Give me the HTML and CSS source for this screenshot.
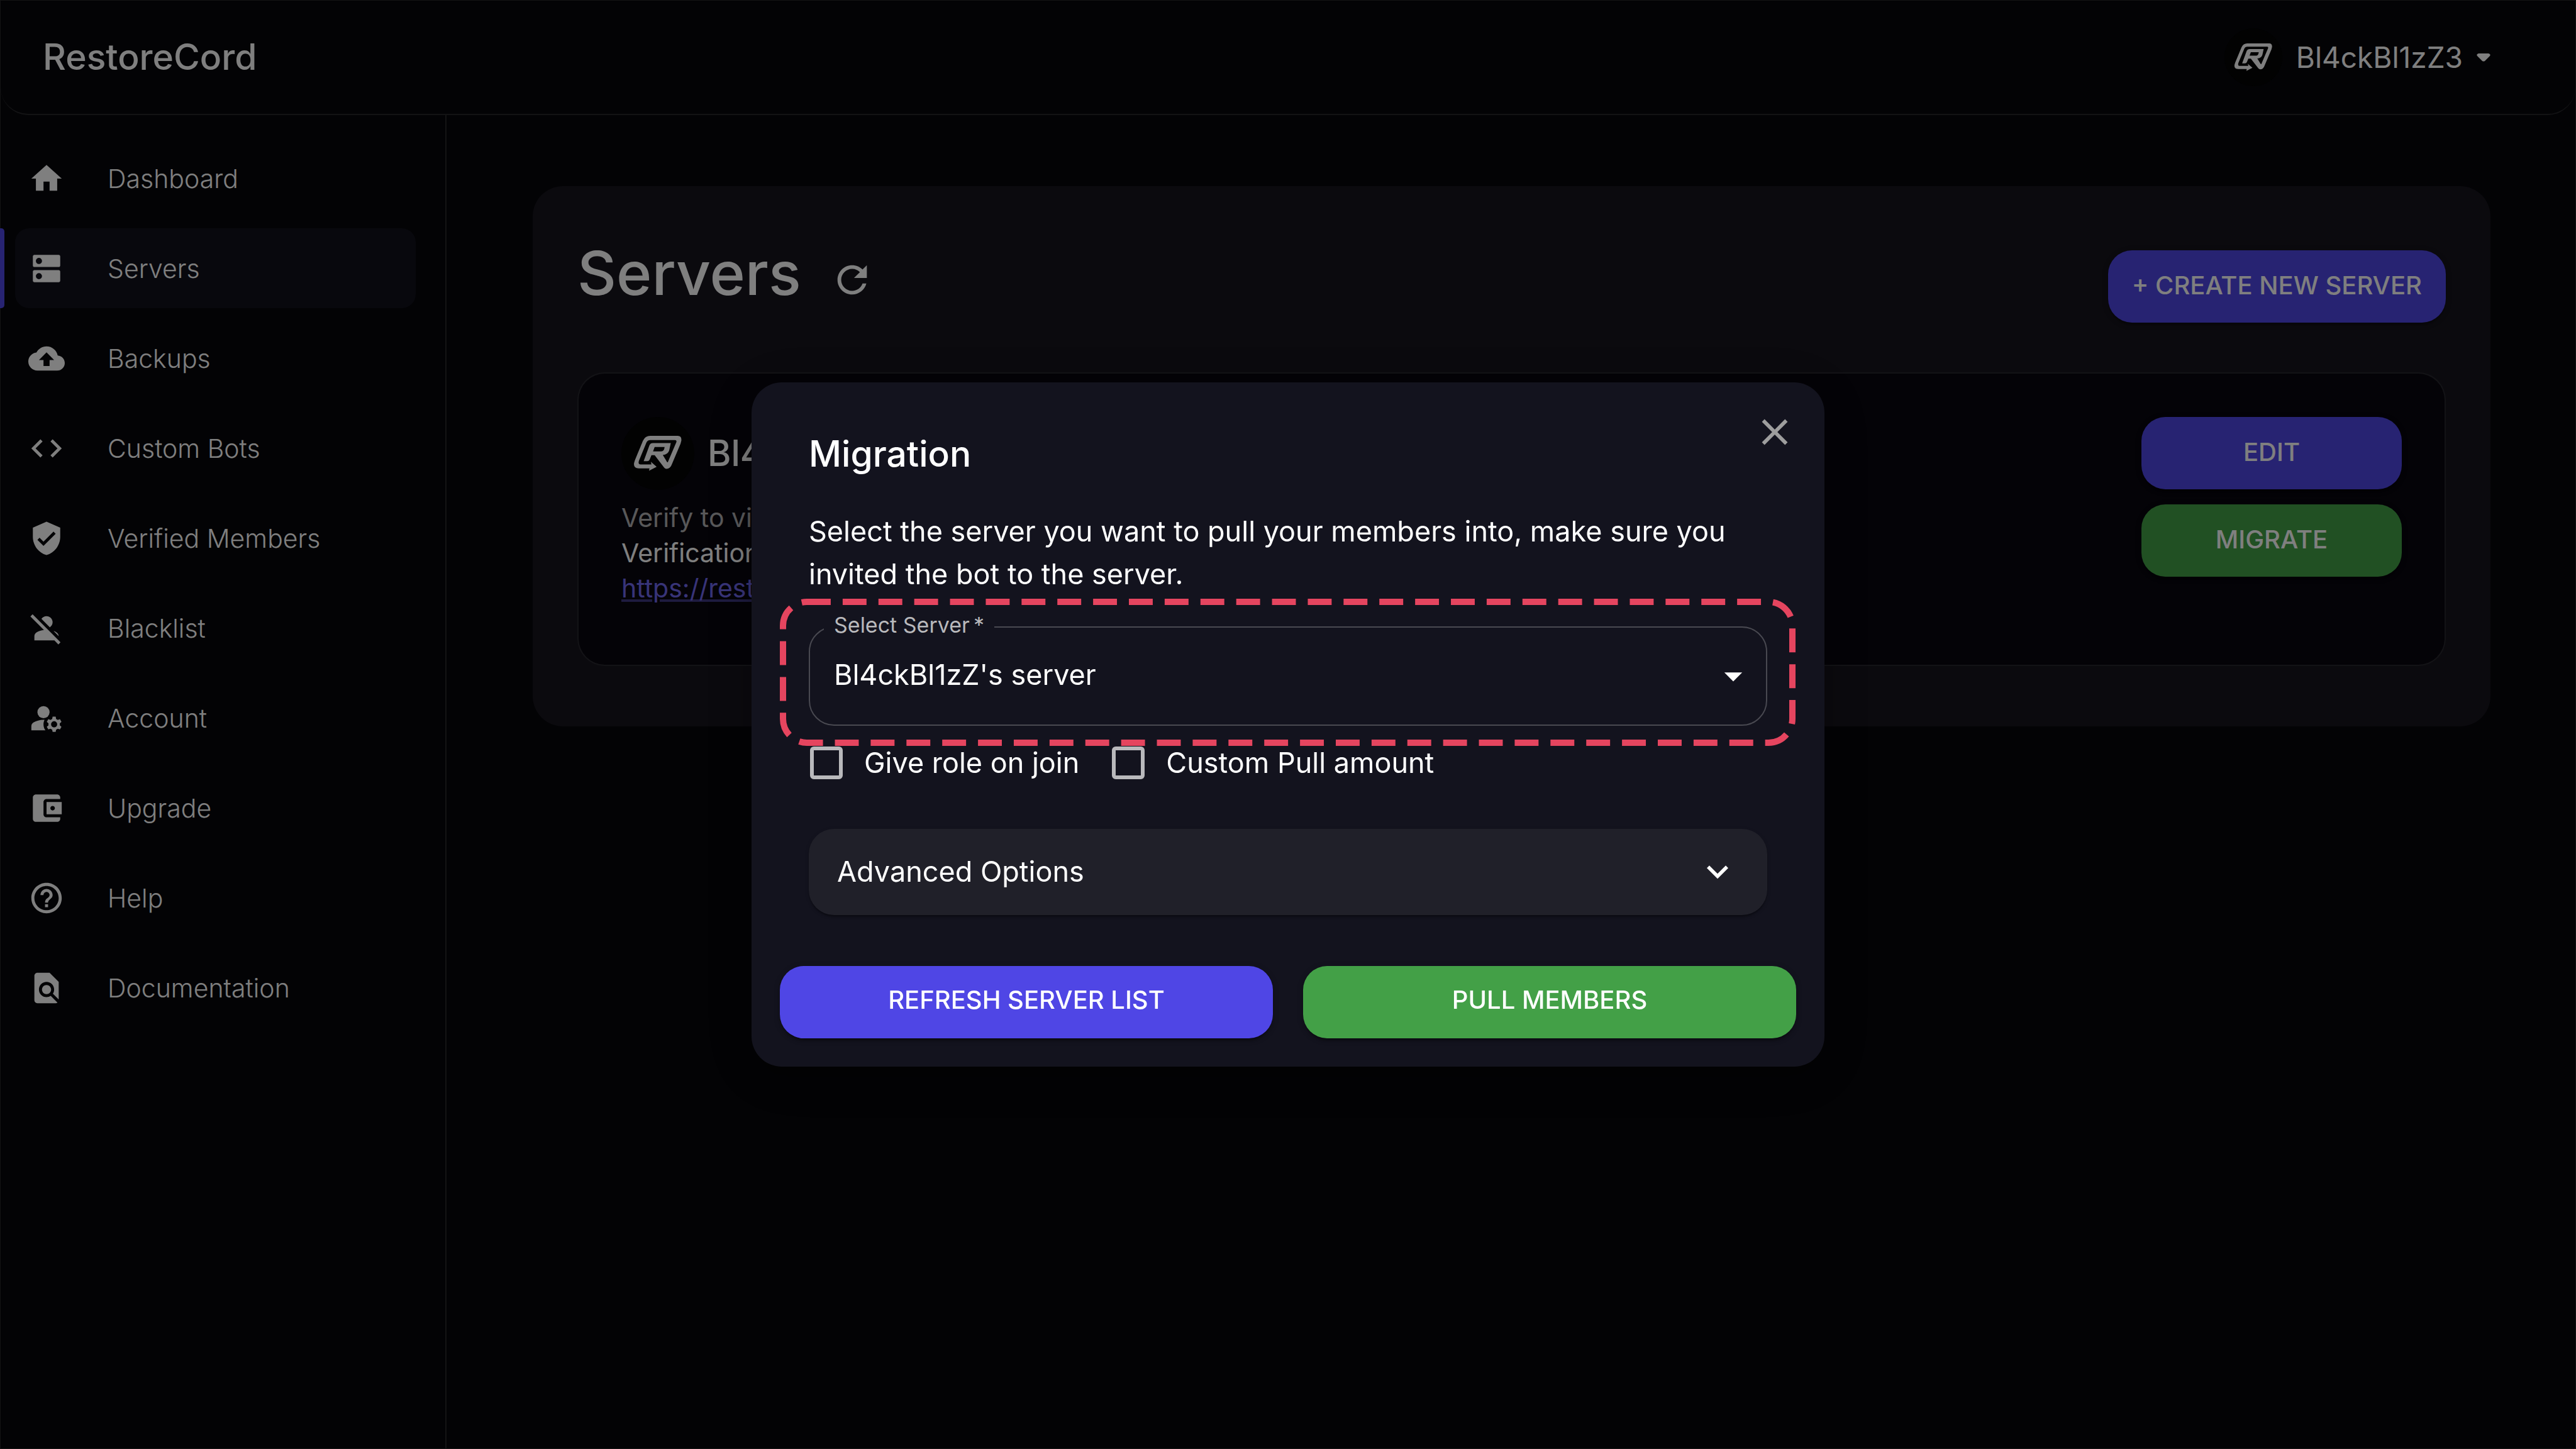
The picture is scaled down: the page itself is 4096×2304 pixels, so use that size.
FILE: index.html
```html
<!DOCTYPE html>
<html lang="en">
<head>
<meta charset="utf-8">
<title>RestoreCord - Servers</title>
<meta name="viewport" content="width=device-width, initial-scale=1">
<link rel="stylesheet" href="styles.css">
</head>
<body>
<svg class="sprite" aria-hidden="true">
  <symbol id="logo" viewBox="95 58 366 366">
    <path fill-rule="evenodd" d="M240 153H378Q398 153 396 176L392 192 346 301Q338 318 322 318 314 318 309 311L262 250H246L237 272Q233 280 225 280H207L236 200Q241 189 253 189H343L335 226Q328 247 303 249L325 285H328L371 184Q374 174 364 174H240Q226 174 221 186L183 278Q178 296 190 296H246L243 283 272 308 234 328 236 316H182Q154 314 159 288L163 275 203 178Q214 153 240 153ZM262 209H312Q310 231 295 231H254Z"/>
  </symbol>
</svg>

<div class="app">
  <header class="topbar">
    <a class="brand" href="#">RestoreCord</a>
    <button class="profile" type="button">
      <span class="avatar avatar-small"><svg><use href="#logo"/></svg></span>
      <span class="profile-name">Bl4ckBl1zZ3</span>
      <svg class="profile-caret" viewBox="0 0 22 14"><path d="M3 1H19Q23 2 21 5L13 13Q11 14 9 13L1 5Q-1 2 3 1Z"/></svg>
    </button>
  </header>

  <div class="body">
    <nav class="sidebar" aria-label="Main">
      <ul class="nav">
        <li><a class="nav-link" href="#"><svg class="icon" viewBox="0 0 24 24"><path d="M10 20v-6h4v6h5v-8h3L12 3 2 12h3v8z"/></svg>Dashboard</a></li>
        <li><a class="nav-link is-active" aria-current="page" href="#"><svg class="icon" viewBox="0 0 24 24"><path d="M20 13H4c-.55 0-1 .45-1 1v6c0 .55.45 1 1 1h16c.55 0 1-.45 1-1v-6c0-.55-.45-1-1-1zM7 19c-1.1 0-2-.9-2-2s.9-2 2-2 2 .9 2 2-.9 2-2 2zM20 3H4c-.55 0-1 .45-1 1v6c0 .55.45 1 1 1h16c.55 0 1-.45 1-1V4c0-.55-.45-1-1-1zM7 9c-1.1 0-2-.9-2-2s.9-2 2-2 2 .9 2 2-.9 2-2 2z"/></svg>Servers</a></li>
        <li><a class="nav-link" href="#"><svg class="icon" viewBox="0 0 24 24"><path d="M19.35 10.04C18.67 6.59 15.64 4 12 4 9.11 4 6.6 5.64 5.35 8.04 2.34 8.36 0 10.91 0 14c0 3.31 2.69 6 6 6h13c2.76 0 5-2.24 5-5 0-2.64-2.05-4.78-4.65-4.96zM14 13v4h-4v-4H7l5-5 5 5h-3z"/></svg>Backups</a></li>
        <li><a class="nav-link" href="#"><svg class="icon" viewBox="0 0 24 24"><path d="M9.4 16.6 4.8 12l4.6-4.6L8 6l-6 6 6 6 1.4-1.4zm5.2 0 4.6-4.6-4.6-4.6L16 6l6 6-6 6-1.4-1.4z"/></svg>Custom Bots</a></li>
        <li><a class="nav-link" href="#"><svg class="icon" viewBox="0 0 24 24"><path d="M12 1 3 5v6c0 5.55 3.84 10.74 9 12 5.16-1.26 9-6.45 9-12V5l-9-4zm-2 16-4-4 1.41-1.41L10 14.17l6.59-6.59L18 9l-8 8z"/></svg>Verified Members</a></li>
        <li><a class="nav-link" href="#"><svg class="icon" viewBox="0 0 24 24"><path d="M8.65 5.82C9.36 4.72 10.6 4 12 4c2.21 0 4 1.79 4 4 0 1.4-.72 2.64-1.82 3.35L8.65 5.82zM20 17.17c-.02-1.1-.63-2.11-1.61-2.62-.54-.28-1.13-.54-1.77-.76L20 17.17zm1.19 4.02L2.81 2.81 1.39 4.22l8.89 8.89c-1.81.23-3.39.79-4.67 1.45-1 .51-1.61 1.54-1.61 2.66V20h13.17l2.61 2.61 1.41-1.42z"/></svg>Blacklist</a></li>
        <li><a class="nav-link" href="#"><svg class="icon" viewBox="0 0 24 24"><circle cx="10" cy="8" r="4"/><path d="M10.67 13.02C10.45 13.01 10.23 13 10 13c-2.42 0-4.68.67-6.61 1.82-.88.52-1.39 1.5-1.39 2.53V20h9.26c-.79-1.13-1.26-2.51-1.26-4 0-1.07.25-2.07.67-2.98zM20.75 16c0-.22-.03-.42-.06-.63l1.14-1.01-1-1.73-1.45.49c-.32-.27-.68-.48-1.08-.63L18 11h-2l-.3 1.49c-.4.15-.76.36-1.08.63l-1.45-.49-1 1.73 1.14 1.01c-.03.21-.06.41-.06.63s.03.42.06.63l-1.14 1.01 1 1.73 1.45-.49c.32.27.68.48 1.08.63L16 21h2l.3-1.49c.4-.15.76-.36 1.08-.63l1.45.49 1-1.73-1.14-1.01c.03-.21.06-.41.06-.63zM17 18c-1.1 0-2-.9-2-2s.9-2 2-2 2 .9 2 2-.9 2-2 2z"/></svg>Account</a></li>
        <li><a class="nav-link" href="#"><svg class="icon" viewBox="0 0 24 24"><path d="M21 18v1c0 1.1-.9 2-2 2H5c-1.11 0-2-.9-2-2V5c0-1.1.89-2 2-2h14c1.1 0 2 .9 2 2v1h-9c-1.11 0-2 .9-2 2v8c0 1.1.89 2 2 2h9zm-9-2h10V8H12v8zm4-2.5c-.83 0-1.5-.67-1.5-1.5s.67-1.5 1.5-1.5 1.5.67 1.5 1.5-.67 1.5-1.5 1.5z"/></svg>Upgrade</a></li>
        <li><a class="nav-link" href="#"><svg class="icon" viewBox="0 0 24 24"><path d="M11 18h2v-2h-2v2zm1-16C6.48 2 2 6.48 2 12s4.48 10 10 10 10-4.48 10-10S17.52 2 12 2zm0 18c-4.41 0-8-3.59-8-8s3.59-8 8-8 8 3.59 8 8-3.59 8-8 8zm0-14c-2.21 0-4 1.79-4 4h2c0-1.1.9-2 2-2s2 .9 2 2c0 2-3 1.75-3 5h2c0-2.25 3-2.5 3-5 0-2.21-1.79-4-4-4z"/></svg>Help</a></li>
        <li><a class="nav-link" href="#"><svg class="icon" viewBox="0 0 24 24"><path d="M20 19.59V8l-6-6H6c-1.1 0-1.99.9-1.99 2L4 20c0 1.1.89 2 1.99 2H18c.45 0 .85-.15 1.19-.4l-4.43-4.43c-.8.52-1.74.83-2.76.83-2.76 0-5-2.24-5-5s2.24-5 5-5 5 2.24 5 5c0 1.02-.31 1.96-.83 2.75L20 19.59zM9 13c0 1.66 1.34 3 3 3s3-1.34 3-3-1.34-3-3-3-3 1.34-3 3z"/></svg>Documentation</a></li>
      </ul>
    </nav>

    <main class="content">
      <section class="panel">
        <div class="panel-head">
          <div class="panel-title">
            <h1>Servers</h1>
            <button class="icon-button" type="button" aria-label="Refresh"><svg viewBox="0 0 24 24"><path d="M17.65 6.35C16.2 4.9 14.21 4 12 4c-4.42 0-7.99 3.58-7.99 8s3.57 8 7.99 8c3.73 0 6.84-2.55 7.73-6h-2.08c-.82 2.33-3.04 4-5.65 4-3.31 0-6-2.69-6-6s2.69-6 6-6c1.66 0 3.14.69 4.22 1.78L13 11h7V4l-2.35 2.35z"/></svg></button>
          </div>
          <button class="button button-primary create" type="button">+ Create new server</button>
        </div>

        <article class="server">
          <div class="server-info">
            <div class="server-head">
              <span class="avatar"><svg><use href="#logo"/></svg></span>
              <h2>Bl4ckBl1zZ</h2>
            </div>
            <p class="server-note">Verify to view server</p>
            <p>Verification URL:</p>
            <a class="server-link" href="#">https://restorecord.com</a>
          </div>
          <div class="server-actions">
            <button class="button button-primary" type="button">Edit</button>
            <button class="button button-success" type="button">Migrate</button>
          </div>
        </article>
      </section>
    </main>
  </div>
</div>

<div class="backdrop">
  <div class="dialog" role="dialog" aria-modal="true" aria-labelledby="dialog-title">
    <button class="icon-button dialog-close" type="button" aria-label="Close"><svg viewBox="0 0 24 24"><path d="M19 6.41 17.59 5 12 10.59 6.41 5 5 6.41 10.59 12 5 17.59 6.41 19 12 13.41 17.59 19 19 17.59 13.41 12z"/></svg></button>
    <form class="dialog-body">
      <h2 id="dialog-title">Migration</h2>
      <p class="dialog-text">Select the server you want to pull your members into, make sure you invited the bot to the server.</p>
      <div class="field">
        <label class="field-label" for="server">Select Server&thinsp;*</label>
        <select class="field-select" id="server"><option>Bl4ckBl1zZ's server</option></select>
        <svg class="field-caret" viewBox="0 0 24 24" aria-hidden="true"><path d="m7 10 5 5 5-5z"/></svg>
        <svg class="highlight" aria-hidden="true"><rect/></svg>
      </div>
      <div class="checks">
        <label class="check"><input type="checkbox">Give role on join</label>
        <label class="check"><input type="checkbox">Custom Pull amount</label>
      </div>
      <button class="accordion" type="button" aria-expanded="false">Advanced Options
        <svg viewBox="0 0 24 24" aria-hidden="true"><path d="M16.59 8.59 12 13.17 7.41 8.59 6 10l6 6 6-6z"/></svg>
      </button>
    </form>
    <div class="dialog-actions">
      <button class="button button-primary" type="button">Refresh server list</button>
      <button class="button button-success" type="button">Pull members</button>
    </div>
  </div>
</div>
</body>
</html>
```
FILE: styles.css
```css
:root {
  --page: #06060a;
  --panel: #16141c;
  --card: #08060e;
  --line: rgba(255, 255, 255, 0.13);
  --primary: #4f46e5;
  --success: #43a047;
  --dialog: #13131e;
  --highlight: #e5455f;
}

* {
  box-sizing: border-box;
  margin: 0;
}

body {
  background: var(--page);
  color: #fff;
  font: 400 41px/56px Inter, "Liberation Sans", sans-serif;
}

button,
select,
input {
  border: 0;
  padding: 0;
  background: none;
  color: inherit;
  font: inherit;
}

svg {
  display: block;
  fill: currentColor;
}

.sprite {
  position: absolute;
  width: 0;
  height: 0;
}

.app {
  display: flex;
  flex-direction: column;
  min-height: 100vh;
  border: 1px solid var(--line);
}

/* Top bar */
.topbar {
  display: flex;
  align-items: center;
  justify-content: space-between;
  height: 182px;
  padding: 0 135px 0 67px;
  border-bottom: 2px solid var(--line);
  border-radius: 0 0 44px 44px;
}

.brand {
  color: #fff;
  font-size: 57px;
  font-weight: 500;
  text-decoration: none;
}

.profile {
  display: flex;
  align-items: center;
  font-size: 46px;
}

.profile-name {
  margin: 0 22px;
}

.profile-caret {
  width: 22px;
  height: 14px;
}

.avatar {
  flex: none;
  width: 116px;
  height: 116px;
  border-radius: 50%;
  background: #040404;
}

.avatar svg {
  width: 100%;
  height: 100%;
}

.avatar-small {
  width: 92px;
  height: 92px;
}

/* Sidebar */
.body {
  display: flex;
  flex: 1;
}

.sidebar {
  flex: none;
  width: 709px;
  padding: 37px 47px 0 23px;
  border-right: 2px solid var(--line);
}

.nav {
  display: grid;
  gap: 16px;
  padding: 0;
  list-style: none;
}

.nav-link {
  position: relative;
  display: flex;
  align-items: center;
  gap: 68px;
  height: 127px;
  padding-left: 21px;
  border-radius: 22px;
  color: #fff;
  font-weight: 300;
  text-decoration: none;
}

.nav-link.is-active {
  background: #10101a;
}

.nav-link.is-active::before {
  content: "";
  position: absolute;
  left: -24px;
  width: 7px;
  height: 100%;
  border-radius: 0 5px 5px 0;
  background: var(--primary);
}

.icon {
  width: 58px;
  height: 58px;
}

/* Content */
.content {
  flex: 1;
  padding: 113px 135px 113px 137px;
}

.panel {
  padding: 92px 71px 96px;
  border-radius: 48px;
  background: var(--panel);
}

.panel-head {
  display: flex;
  align-items: flex-start;
  justify-content: space-between;
  margin-bottom: 79px;
}

.panel-title {
  display: flex;
  align-items: flex-end;
  gap: 46px;
}

h1 {
  font-size: 96px;
  font-weight: 500;
  line-height: 92px;
}

h2 {
  font-size: 57px;
  font-weight: 500;
  line-height: 92px;
}

.icon-button svg {
  width: 70px;
  height: 70px;
}

.button {
  height: 115px;
  padding-bottom: 3px;
  border-radius: 38px;
  font-size: 40px;
  font-weight: 500;
  text-transform: uppercase;
  box-shadow: 0 7px 3px -4px rgba(0, 0, 0, 0.2), 0 4px 4px rgba(0, 0, 0, 0.14), 0 2px 12px rgba(0, 0, 0, 0.12);
}

.button-primary {
  background: var(--primary);
}

.button-success {
  background: var(--success);
}

.create {
  margin-top: 10px;
  padding-inline: 38px;
}

.server {
  display: flex;
  justify-content: space-between;
  padding: 69px 68px 94px;
  border: 2px solid var(--line);
  border-radius: 44px;
  background: var(--card);
}

.server-head {
  display: flex;
  align-items: center;
  gap: 21px;
  margin-bottom: 16px;
}

.server-note {
  color: rgba(255, 255, 255, 0.7);
}

.server-link {
  color: #7068f0;
  text-decoration-color: rgba(112, 104, 240, 0.5);
}

.server-actions {
  display: flex;
  flex-direction: column;
  gap: 24px;
  width: 414px;
}

/* Migration dialog */
.backdrop {
  position: fixed;
  inset: 0;
  display: flex;
  align-items: center;
  justify-content: center;
  background: rgba(0, 0, 0, 0.5);
}

.dialog {
  position: relative;
  width: 1706px;
  max-width: 100%;
  padding: 68px 45px 45px;
  border-radius: 48px;
  background: var(--dialog);
  font-size: 45px;
  box-shadow: 0 20px 30px -10px rgba(0, 0, 0, 0.2), 0 30px 50px rgba(0, 0, 0, 0.14), 0 12px 80px 10px rgba(0, 0, 0, 0.12);
}

.dialog-close {
  position: absolute;
  top: 44px;
  right: 44px;
  color: #9e9e9e;
}

.dialog-body {
  padding: 0 46px;
}

.dialog-text {
  margin: 43px 0 49px;
  line-height: 68px;
}

.field {
  position: relative;
}

.field-label {
  position: absolute;
  top: -30px;
  left: 24px;
  padding: 0 16px;
  background: var(--dialog);
  color: #b9b9bc;
  font-size: 34px;
}

.field-select {
  width: 100%;
  height: 158px;
  padding: 0 100px 4px 38px;
  border: 2px solid #494951;
  border-radius: 40px;
  appearance: none;
}

.field-caret {
  position: absolute;
  top: 45px;
  right: 20px;
  width: 68px;
  height: 68px;
  pointer-events: none;
}

/* Dashed outline drawn around the server field */
.highlight {
  position: absolute;
  top: -44px;
  left: -46px;
  width: calc(100% + 91px);
  height: calc(100% + 76px);
  overflow: visible;
  pointer-events: none;
}

.highlight rect {
  x: 5px;
  y: 5px;
  width: calc(100% - 10px);
  height: calc(100% - 10px);
  rx: 38px;
  fill: none;
  stroke: var(--highlight);
  stroke-width: 10px;
  stroke-dasharray: 37.93 18.96;
}

.checks {
  display: flex;
  gap: 50px;
  margin: 31px 0 77px;
}

.check {
  display: flex;
  align-items: center;
  gap: 34px;
}

.check input {
  width: 52px;
  height: 52px;
  margin-left: 2px;
  border: 6px solid #b9b9bc;
  border-radius: 6px;
  appearance: none;
}

.accordion {
  display: flex;
  align-items: center;
  justify-content: space-between;
  width: 100%;
  height: 137px;
  padding: 0 45px 2px;
  border-radius: 40px;
  background: #202029;
  box-shadow: 0 5px 3px -2px rgba(0, 0, 0, 0.2), 0 2px 2px rgba(0, 0, 0, 0.14), 0 2px 7px rgba(0, 0, 0, 0.12);
}

.accordion svg {
  width: 68px;
  height: 68px;
}

.dialog-actions {
  display: grid;
  grid-template-columns: 1fr 1fr;
  gap: 48px;
  margin-top: 81px;
}

.dialog-actions .button {
  padding-bottom: 8px;
}
```
